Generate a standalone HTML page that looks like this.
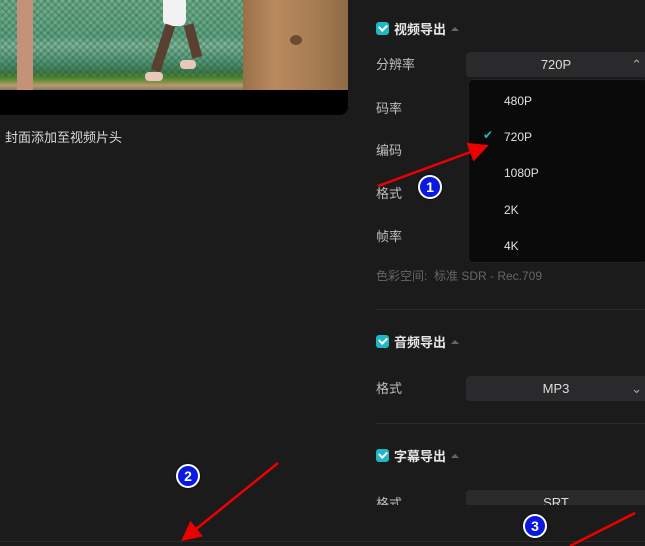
<!DOCTYPE html>
<html><head><meta charset="utf-8"><style>
*{margin:0;padding:0;box-sizing:border-box}
body{width:645px;height:546px;background:#1b1b1b;position:relative;overflow:hidden;font-family:"Liberation Sans","Noto Sans CJK SC",sans-serif;color:#cfcfcf;font-size:13px}
.a{position:absolute}
.lbl{position:absolute;left:376px;font-size:13px;color:#bdbdbd}
.sel{position:absolute;left:466px;width:190px;height:25px;background:#2a2a2c;border-radius:4px;text-align:center;line-height:25px;font-size:13px;color:#ddd;padding-right:10px}
.chk{position:absolute;left:376px;width:13px;height:13px;background:#1fb8c6;border-radius:3px}
.chk:after{content:"";position:absolute;left:3px;top:2px;width:6px;height:4px;border-left:2px solid #fff;border-bottom:2px solid #fff;transform:rotate(-45deg)}
.hd{position:absolute;left:394px;font-size:13px;font-weight:bold;color:#e6e6e6}
.hd:after{content:"";display:inline-block;margin-left:5px;border:4px solid transparent;border-bottom:4px solid #666;vertical-align:3px}
.div{position:absolute;left:376px;right:0;height:1px;background:#2c2c2c}
.opt{position:absolute;left:504px;font-size:12px;color:#e0e0e0}
.num{position:absolute;width:24px;height:24px;border-radius:50%;background:#0a18e0;border:2px solid #fff;color:#fff;font-weight:bold;font-size:14px;text-align:center;line-height:20px;box-shadow:0 0 2px #000}
</style></head><body>
<div class="a" style="left:0;top:0;width:348px;height:115px;background:#000;border-radius:0 0 8px 0;overflow:hidden">
 <div class="a" style="left:0;top:0;width:245px;height:90px;background:linear-gradient(180deg,#6fae8a 0%,#5ea582 40%,#7fb89a 50%,#4d9270 70%,#3e7a4a 80%,#5a8a2c 88%,#b49a72 95%,#8a7a60 100%)"></div>
 <div class="a" style="left:0;top:0;width:245px;height:78px;background:repeating-linear-gradient(45deg,rgba(40,80,60,.25) 0 2px,transparent 2px 5px),repeating-linear-gradient(-45deg,rgba(40,80,60,.25) 0 2px,transparent 2px 5px)"></div>
 <div class="a" style="left:17px;top:0;width:16px;height:90px;background:#c49278"></div>
 <div class="a" style="left:163px;top:0;width:23px;height:26px;background:#f2f2f2;border-radius:0 0 6px 6px"></div>
 <div class="a" style="left:158px;top:24px;width:10px;height:48px;background:#5a4030;transform:rotate(18deg)"></div>
 <div class="a" style="left:188px;top:24px;width:10px;height:34px;background:#5a4030;transform:rotate(-15deg)"></div>
 <div class="a" style="left:145px;top:72px;width:18px;height:9px;background:#e8c8b8;border-radius:4px"></div>
 <div class="a" style="left:180px;top:60px;width:16px;height:9px;background:#e8c8b8;border-radius:4px"></div>
 <div class="a" style="left:243px;top:0;width:105px;height:90px;background:linear-gradient(90deg,#9a7048,#b88a5e 30%,#a67c52 70%,#8e6a46)"></div>
 <div class="a" style="left:290px;top:35px;width:12px;height:10px;background:#6a4a30;border-radius:50%"></div>
</div>
<div class="a" style="left:5px;top:127px;font-size:13px;color:#d8d8d8">封面添加至视频片头</div>

<div class="chk" style="top:22px"></div><div class="hd" style="top:19px">视频导出</div>
<div class="lbl" style="top:54px">分辨率</div>
<div class="sel" style="top:52px">720P<span style="position:absolute;right:14px;color:#aaa">⌃</span></div>
<div class="lbl" style="top:98px">码率</div>
<div class="lbl" style="top:140px">编码</div>
<div class="lbl" style="top:183px">格式</div>
<div class="lbl" style="top:226px">帧率</div>
<div class="lbl" style="top:267px;color:#666;font-size:12px">色彩空间:&nbsp;&nbsp;标准 SDR - Rec.709</div>
<div class="a" style="left:468px;top:79px;width:180px;height:184px;background:#0a0a0b;border:1px solid #222;border-radius:5px"></div>
<div class="opt" style="top:94px">480P</div>
<div class="a" style="left:483px;top:128px;color:#1fb8c6;font-size:12px">✔</div>
<div class="opt" style="top:130px">720P</div>
<div class="opt" style="top:166px">1080P</div>
<div class="opt" style="top:203px">2K</div>
<div class="opt" style="top:239px">4K</div>

<div class="div" style="top:309px"></div>
<div class="chk" style="top:335px"></div><div class="hd" style="top:332px">音频导出</div>
<div class="lbl" style="top:378px">格式</div>
<div class="sel" style="top:376px">MP3<span style="position:absolute;right:14px;color:#aaa">⌄</span></div>
<div class="div" style="top:423px"></div>
<div class="chk" style="top:449px"></div><div class="hd" style="top:446px">字幕导出</div>
<div class="a" style="left:366px;top:490px;width:280px;height:15px;overflow:hidden">
 <div class="lbl" style="left:10px;top:3px">格式</div>
 <div class="sel" style="left:100px;top:0">SRT</div>
</div>
<div class="a" style="left:0;top:541px;width:645px;height:1px;background:#2a2a2a"></div>

<svg class="a" style="left:0;top:0" width="645" height="546">
 <defs><marker id="m" markerWidth="8" markerHeight="8" refX="6" refY="4" orient="auto" markerUnits="strokeWidth"><path d="M0,0 L8,4 L0,8 Z" fill="#e00"/></marker></defs>
 <g stroke="#e00" stroke-width="2.5" fill="none">
  <line x1="378" y1="186" x2="484" y2="147" marker-end="url(#m)"/>
  <line x1="278" y1="463" x2="185" y2="538" marker-end="url(#m)"/>
  <line x1="635" y1="513" x2="570" y2="546"/>
 </g>
</svg>
<div class="num" style="left:418px;top:175px">1</div>
<div class="num" style="left:176px;top:464px">2</div>
<div class="num" style="left:523px;top:514px">3</div>
</body></html>
